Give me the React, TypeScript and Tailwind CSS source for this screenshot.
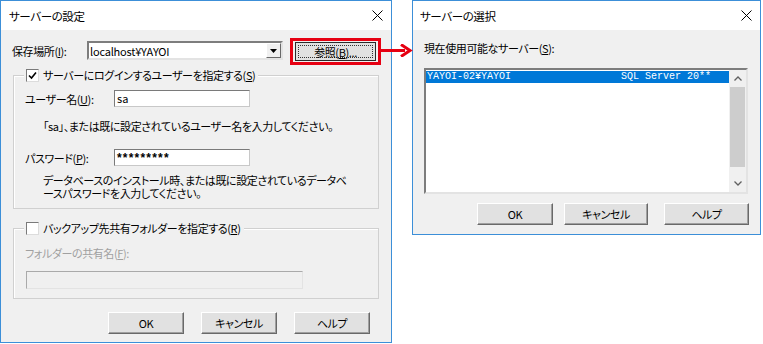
import React from "react";

function CloseX() {
  return (
    <svg width="11" height="11" viewBox="0 0 11 11" className="block">
      <path d="M0.5 0.5L10.5 10.5M10.5 0.5L0.5 10.5" stroke="#000" strokeWidth="1" fill="none" />
    </svg>
  );
}

function Btn({ label, w, cls = "" }: { label: string; w: string; cls?: string }) {
  return (
    <div
      className={`${w} h-[22px] flex items-center justify-center bg-[#e1e1e1] border border-t-white border-l-white border-b-[#696969] border-r-[#696969] shadow-[inset_-1px_-1px_0_#a0a0a0] ${cls}`}
    >
      {label}
    </div>
  );
}

function Check({ checked }: { checked: boolean }) {
  return (
    <div className="w-[13px] h-[13px] bg-white border border-t-[#7a7a7a] border-l-[#7a7a7a] border-b-[#dcdcdc] border-r-[#dcdcdc] flex items-center justify-center">
      {checked && (
        <svg width="9" height="9" viewBox="0 0 9 9">
          <path d="M1 4.5L3.5 7L8 1.5" stroke="#000" strokeWidth="1.6" fill="none" />
        </svg>
      )}
    </div>
  );
}

export default function App() {
  return (
    <div className="w-[763px] h-[344px] bg-white relative flex items-start text-black font-['Meiryo_UI','Noto_Sans_CJK_JP',sans-serif] [font-feature-settings:'palt'] text-[11px] tracking-[-0.4px] leading-[16px] whitespace-nowrap">
      {/* Left dialog */}
      <div className="w-[392px] h-[343px] border border-[#3c8fd8] flex flex-col">
        <div className="h-[29px] bg-white flex items-center justify-between pl-[8px] pr-[8px] text-[11.5px]">
          <span>サーバーの設定</span>
          <CloseX />
        </div>
        <div className="flex-1 bg-[#f0f0f0] pl-[11px] pt-[11px] flex flex-col">
          {/* row 1 */}
          <div className="flex items-start h-[20px]">
            <div className="w-[75px] h-[19px] flex items-center">保存場所(<span className="underline">I</span>):</div>
            <div className="w-[196px] h-[19px] bg-white border-2 border-t-[#7d7d7d] border-l-[#7d7d7d] border-b-[#e3e3e3] border-r-[#e3e3e3] flex items-center">
              <span className="flex-1 pl-[1px] leading-[14px] tracking-[-0.2px]">localhost¥YAYOI</span>
              <div className="w-[15px] h-[15px] bg-[#f0f0f0] border border-t-white border-l-white border-b-[#696969] border-r-[#696969] flex items-center justify-center">
                <svg width="7" height="4" viewBox="0 0 7 4"><path d="M0 0H7L3.5 4Z" fill="#000" /></svg>
              </div>
            </div>
            <div className="relative ml-[12px] mt-[1px]">
              <div className="w-[81px] h-[19px] bg-[#e1e1e1] border border-[#2a2a2a] p-[2px]">
                <div className="w-full h-full border border-dotted border-[#333] flex items-center justify-center leading-[12px]">
                  参照(<span className="underline">B</span>)...
                </div>
              </div>
              <div className="absolute left-[-5px] top-[-4px] w-[91px] h-[27px] border-[3px] border-[#e60012]" />
            </div>
          </div>

          {/* group 1 */}
          <div className="relative ml-[1px] mt-[14px] w-[366px] h-[134px] border border-[#d0d0d0] shadow-[inset_1px_1px_0_#fff] pl-[11px] pt-[14px] flex flex-col">
            <div className="absolute left-[10px] top-[-9px] bg-[#f0f0f0] flex items-center gap-[4px] pl-[2px] pr-[3px] h-[16px]">
              <Check checked />
              <span>サーバーにログインするユーザーを指定する(<span className="underline">S</span>)</span>
            </div>
            <div className="flex items-center h-[17px]">
              <div className="w-[89px]">ユーザー名(<span className="underline">U</span>):</div>
              <div className="w-[136px] h-[17px] bg-white border border-[#7a7a7a] border-b-[#c8c8c8] border-r-[#c8c8c8] pl-[2px] leading-[15px] tracking-[0px]">sa</div>
            </div>
            <div className="mt-[11px] pl-[18px]">「sa」、または既に設定されているユーザー名を入力してください。</div>
            <div className="flex items-center h-[17px] mt-[15px]">
              <div className="w-[89px]">パスワード(<span className="underline">P</span>):</div>
              <div className="w-[136px] h-[17px] bg-white border border-[#7a7a7a] border-b-[#c8c8c8] border-r-[#c8c8c8] pl-[2px] leading-[17px] font-['Liberation_Sans',sans-serif] font-bold text-[12px] tracking-[1.2px]">*********</div>
            </div>
            <div className="mt-[8px] pl-[18px] leading-[13px]">
              データベースのインストール時、または既に設定されているデータベ
              <br />
              ースパスワードを入力してください。
            </div>
          </div>

          {/* group 2 */}
          <div className="relative ml-[1px] mt-[19px] w-[366px] h-[71px] border border-[#d0d0d0] shadow-[inset_1px_1px_0_#fff] pl-[11px] pt-[16px] flex flex-col">
            <div className="absolute left-[10px] top-[-9px] bg-[#f0f0f0] flex items-center gap-[4px] pl-[2px] pr-[3px] h-[16px]">
              <Check checked={false} />
              <span>バックアップ先共有フォルダーを指定する(<span className="underline">R</span>)</span>
            </div>
            <div className="text-[#a0a0a0]">フォルダーの共有名(<span className="underline">F</span>):</div>
            <div className="ml-[1px] mt-[10px] w-[277px] h-[18px] bg-[#f0f0f0] border border-[#aaaaaa] border-b-[#e3e3e3] border-r-[#e3e3e3]" />
          </div>

          {/* buttons */}
          <div className="flex mt-[13px] ml-[96px] gap-[17px]">
            <Btn label="OK" w="w-[76px]" />
            <Btn label="キャンセル" w="w-[76px]" />
            <Btn label="ヘルプ" w="w-[76px]" />
          </div>
        </div>
      </div>

      {/* arrow */}
      <svg className="absolute left-[381px] top-[44px]" width="32" height="13" viewBox="0 0 32 13">
        <path d="M0 6.5H24" stroke="#e60012" strokeWidth="3" />
        <path d="M20 0.5L29 6.5L20 12.5" stroke="#e60012" strokeWidth="3" fill="none" />
      </svg>

      {/* Right dialog */}
      <div className="ml-[20px] w-[349px] h-[235px] border border-[#3c8fd8] flex flex-col">
        <div className="h-[29px] bg-white flex items-center justify-between pl-[7px] pr-[8px] text-[11.5px]">
          <span>サーバーの選択</span>
          <CloseX />
        </div>
        <div className="flex-1 bg-[#f0f0f0] pl-[11px] pt-[10px] flex flex-col">
          <div>現在使用可能なサーバー(<span className="underline">S</span>):</div>
          <div className="mt-[12px] w-[324px] h-[126px] bg-white border-2 border-t-[#7d7d7d] border-l-[#7d7d7d] border-b-[#e3e3e3] border-r-[#e3e3e3] flex">
            <div className="flex-1 pt-[1px] overflow-hidden">
              <div className="h-[12px] bg-[#0078d7] text-white flex font-['Liberation_Mono',monospace] text-[10px] tracking-[0px] leading-[12px] whitespace-nowrap">
                <span className="w-[195px] pl-[1px]">YAYOI-02¥YAYOI</span>
                <span>SQL Server 20**</span>
              </div>
            </div>
            <div className="w-[17px] bg-[#f0f0f0] flex flex-col">
              <div className="h-[17px] flex items-center justify-center">
                <svg width="8" height="5" viewBox="0 0 8 5"><path d="M0.5 4.5L4 1L7.5 4.5" stroke="#606060" strokeWidth="1.3" fill="none" /></svg>
              </div>
              <div className="h-[80px] mx-[1px] bg-[#cdcdcd]" />
              <div className="flex-1" />
              <div className="h-[17px] flex items-center justify-center">
                <svg width="8" height="5" viewBox="0 0 8 5"><path d="M0.5 0.5L4 4L7.5 0.5" stroke="#606060" strokeWidth="1.3" fill="none" /></svg>
              </div>
            </div>
          </div>
          <div className="flex mt-[9px] ml-[53px]">
            <Btn label="OK" w="w-[76px]" />
            <Btn label="キャンセル" w="w-[84px]" cls="ml-[11px]" />
            <Btn label="ヘルプ" w="w-[85px]" cls="ml-[16px]" />
          </div>
        </div>
      </div>
    </div>
  );
}
